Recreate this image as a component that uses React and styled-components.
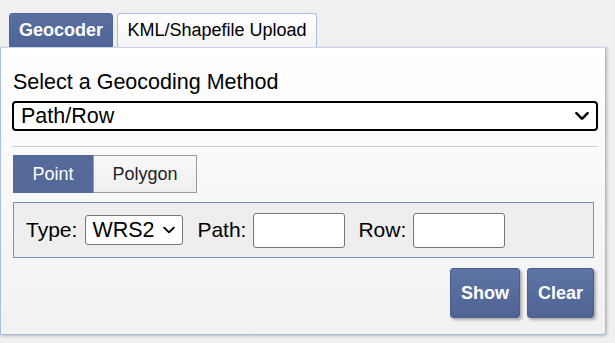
import React from "react";
import styled, { createGlobalStyle } from "styled-components";

const FONT = `"Liberation Sans", Arial, sans-serif`;

const Global = createGlobalStyle`
  html, body { margin: 0; padding: 0; background: #f0f0f0; }
  body { font-family: ${FONT}; color: #000; }
  * { box-sizing: border-box; }
`;

const Page = styled.div`
  padding-top: 13px;
  width: 615px;
  height: 343px;
`;

const Tabs = styled.div`
  display: flex;
  gap: 4px;
  padding-left: 9px;
  height: 34px;
`;

const Tab = styled.div`
  height: 34px;
  display: flex;
  align-items: center;
  justify-content: center;
  width: ${(p) => p.$w}px;
  font-size: 18px;
  border-radius: 3px 3px 0 0;
  ${(p) =>
    p.$active
      ? `background: linear-gradient(#5a6fa0, #4f6597); color: #fff; font-weight: bold; border: 1px solid #4f6597;`
      : `background: linear-gradient(#ffffff, #f4f4f4); color: #000; border: 1px solid #a8bde0; border-bottom: none;`}
`;

const Panel = styled.div`
  width: 606px;
  height: 288px;
  border: 1px solid #a8bde0;
  border-top-color: #c8d4ea;
  border-radius: 0 0 3px 0;
  background: linear-gradient(#ffffff, #f1f1f1);
  box-shadow: 1px 1px 3px rgba(0, 0, 0, 0.25);
  padding: 22px 11px 0 11px;
  display: flex;
  flex-direction: column;
`;

const Heading = styled.div`
  font-size: 21.5px;
  line-height: 24px;
  padding-left: 1px;
  margin-bottom: 7px;
`;

const SelectWrap = styled.div`
  position: relative;
  flex: none;
  width: ${(p) => p.$w}px;
  height: ${(p) => p.$h}px;
`;

const Select = styled.select`
  appearance: none;
  -webkit-appearance: none;
  width: 100%;
  height: 100%;
  font-family: ${FONT};
  font-size: 21.5px;
  color: #000;
  background: #fff;
  border: ${(p) => (p.$strong ? "2px solid #000" : "1px solid #767676")};
  border-radius: ${(p) => (p.$strong ? "4px" : "3px")};
  padding: 0 0 0 ${(p) => (p.$strong ? 7 : 6)}px;
  outline: none;
  margin: 0;
`;

const Chevron = styled.svg`
  position: absolute;
  right: ${(p) => p.$r}px;
  top: 50%;
  transform: translateY(-50%);
  pointer-events: none;
`;

const Rule = styled.div`
  height: 1px;
  background: #cccccc;
  margin: 15px 0 8px 1px;
  width: 585px;
`;

const Group = styled.div`
  display: flex;
  padding-left: 1px;
`;

const Seg = styled.div`
  height: 38px;
  width: ${(p) => p.$w}px;
  display: flex;
  align-items: center;
  justify-content: center;
  font-size: 18px;
  ${(p) =>
    p.$active
      ? `background: #55699a; color: #fff; border: 1px solid #55699a;`
      : `background: linear-gradient(#f8f8f8, #efefef); color: #222; border: 1px solid #9a9a9a;`}
`;

const Fieldset = styled.div`
  margin: 9px 0 0 1px;
  width: 581px;
  height: 56px;
  border: 1px solid #7191c8;
  background: #eeeeee;
  display: flex;
  align-items: center;
  padding-left: 12px;
`;

const Label = styled.span`
  font-size: 21px;
  margin-right: ${(p) => p.$mr}px;
  margin-left: ${(p) => p.$ml || 0}px;
`;

const Input = styled.input`
  flex: none;
  width: 92px;
  height: 35px;
  border: 1px solid #767676;
  border-radius: 3px;
  background: #fff;
  margin: 0;
  font-size: 18px;
`;

const Actions = styled.div`
  display: flex;
  justify-content: flex-end;
  gap: 7px;
  width: 582px;
  margin-top: 10px;
`;

const Button = styled.button`
  width: ${(p) => p.$w}px;
  height: 50px;
  font-family: ${FONT};
  font-size: 18px;
  font-weight: bold;
  color: #fff;
  background: linear-gradient(#5e74a5, #4f6495);
  border: 1px solid #4a5e8e;
  border-radius: 3px;
  box-shadow: 2px 2px 3px rgba(0, 0, 0, 0.3);
  padding: 0;
`;

const ChevronIcon = ({ r, size, w }) => (
  <Chevron $r={r} width={size} height={size * 0.6} viewBox="0 0 10 6">
    <path d="M1 1 L5 5 L9 1" fill="none" stroke="#000" strokeWidth={w} strokeLinecap="round" strokeLinejoin="round" />
  </Chevron>
);

export default function App() {
  return (
    <Page>
      <Global />
      <Tabs>
        <Tab $active $w={104}>Geocoder</Tab>
        <Tab $w={200}>KML/Shapefile Upload</Tab>
      </Tabs>
      <Panel>
        <Heading>Select a Geocoding Method</Heading>
        <SelectWrap $w={586} $h={30}>
          <Select $strong defaultValue="pr">
            <option value="pr">Path/Row</option>
          </Select>
          <ChevronIcon r={9} size={14} w={1.8} />
        </SelectWrap>
        <Rule />
        <Group>
          <Seg $active $w={80}>Point</Seg>
          <Seg $w={104}>Polygon</Seg>
        </Group>
        <Fieldset>
          <Label $mr={8}>Type:</Label>
          <SelectWrap $w={98} $h={30}>
            <Select defaultValue="w">
              <option value="w">WRS2</option>
            </Select>
            <ChevronIcon r={8} size={12} w={1.6} />
          </SelectWrap>
          <Label $ml={14} $mr={7}>Path:</Label>
          <Input />
          <Label $ml={13} $mr={7}>Row:</Label>
          <Input />
        </Fieldset>
        <Actions>
          <Button $w={70}>Show</Button>
          <Button $w={67}>Clear</Button>
        </Actions>
      </Panel>
    </Page>
  );
}
